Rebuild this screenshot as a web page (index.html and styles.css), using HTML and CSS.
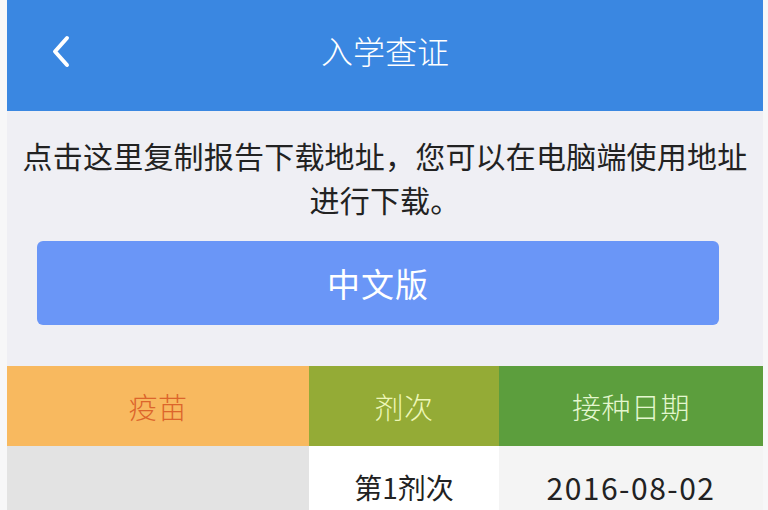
FILE: index.html
```html
<!DOCTYPE html>
<html lang="zh-CN">
<head>
<meta charset="utf-8">
<title>入学查证</title>
<link rel="stylesheet" href="styles.css">
</head>
<body>
<div class="page">
  <header class="topbar">
    <span class="back">
      <svg width="20" height="34" viewBox="0 0 20 34"><polyline points="15,3 3,16.5 15,30" fill="none" stroke="#fff" stroke-width="4" stroke-linecap="round" stroke-linejoin="round"/></svg>
    </span>
    <h1 class="title">入学查证</h1>
  </header>
  <main class="content">
    <p class="notice">点击这里复制报告下载地址，您可以在电脑端使用地址进行下载。</p>
    <div class="btn-wrap"><button class="btn">中文版</button></div>
    <div class="table">
      <div class="cell th th-vaccine">疫苗</div>
      <div class="cell th th-dose">剂次</div>
      <div class="cell th th-date">接种日期</div>
      <div class="cell td td-vaccine"></div>
      <div class="cell td td-dose">第1剂次</div>
      <div class="cell td td-date">2016-08-02</div>
    </div>
  </main>
</div>
</body>
</html>
```

FILE: styles.css
```css
html, body {
  margin: 0;
  padding: 0;
  background: #f7f7f8;
  height: 100%;
  overflow: hidden;
}
body {
  font-family: "Noto Sans CJK SC", "Noto Sans", sans-serif;
}
.page {
  margin: 0 5px 0 7px;
  background: #efeff4;
  min-height: 510px;
}
.topbar {
  height: 111px;
  background: #3a87e1;
  display: flex;
  align-items: center;
  justify-content: center;
  position: relative;
}
.back {
  position: absolute;
  left: 45px;
  top: 35px;
  width: 20px;
  height: 34px;
}
.back svg { display: block; }
.title {
  margin: 0;
  color: #ffffff;
  font-size: 32px;
  font-weight: 300;
  line-height: 1;
  padding-bottom: 12px;
}
.content {
  padding-top: 22px;
}
.notice {
  margin: 0;
  padding: 0 6px;
  text-align: center;
  font-size: 30px;
  letter-spacing: 0.2px;
  line-height: 44px;
  color: #222222;
}
.btn-wrap {
  padding: 20px 44px 0 30px;
}
.btn {
  display: block;
  width: 100%;
  height: 84px;
  border: none;
  border-radius: 6px;
  background: #6a96f7;
  color: #ffffff;
  font-family: inherit;
  font-size: 33px;
  font-weight: 400;
  letter-spacing: 1px;
  padding: 0;
}
.table {
  margin-top: 41px;
  display: grid;
  grid-template-columns: 302px 190px 1fr;
  grid-template-rows: 80px 80px;
}
.cell {
  display: flex;
  align-items: center;
  justify-content: center;
  font-size: 28px;
}
.th { font-weight: 300; font-size: 29px; letter-spacing: 0.5px; }
.th-vaccine { background: #f8b95f; color: #dc652b; }
.th-dose { background: #94ab36; color: #eef7b8; }
.th-date { background: #5c9e3d; color: #e4f7cf; }
.td { color: #222222; padding-top: 2px; }
.td-vaccine { background: #e3e3e3; }
.td-dose { background: #ffffff; }
.td-date { background: #f4f4f4; font-size: 30px; letter-spacing: 1.5px; }
```
